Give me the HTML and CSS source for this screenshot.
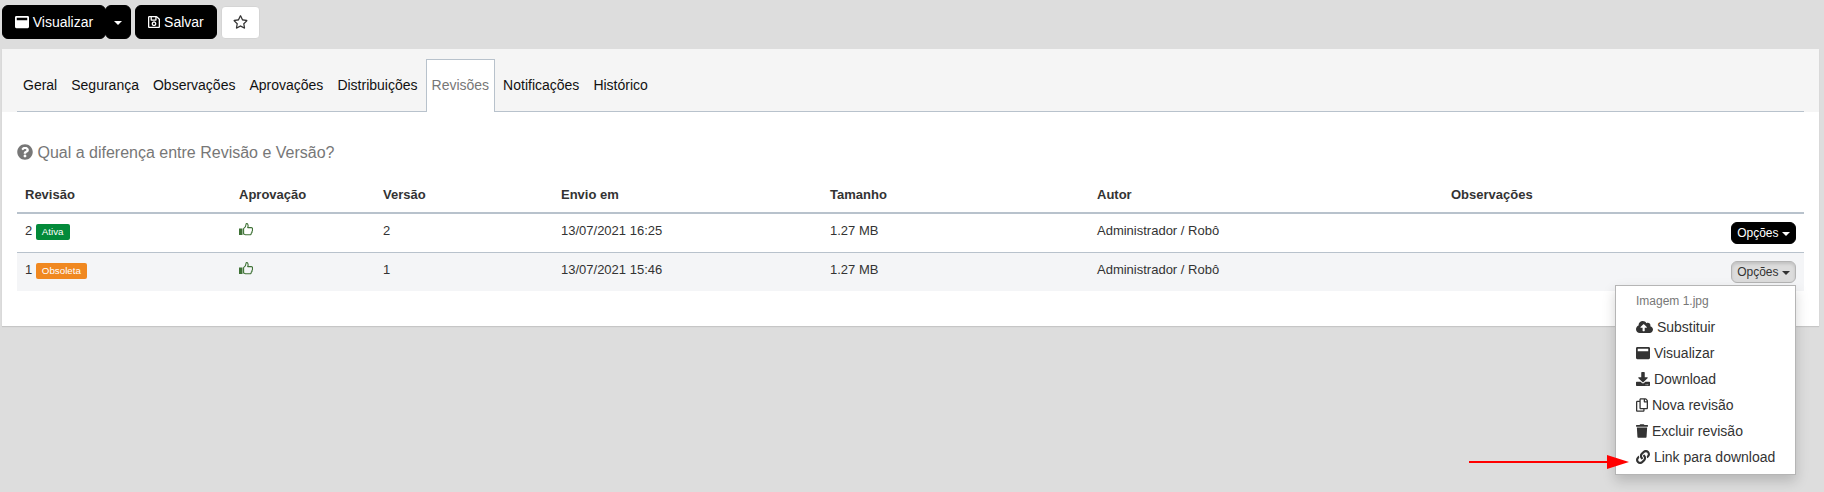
FILE: index.html
```html
<!DOCTYPE html>
<html lang="pt">
<head>
<meta charset="utf-8">
<title>Revisões</title>
<link rel="stylesheet" href="styles.css">
</head>
<body>
<svg class="defs" width="0" height="0">
  <symbol id="i-window" viewBox="0 0 512 512"><path fill="currentColor" d="M464 32H48C21.500 32 0 53.500 0 80v352c0 26.500 21.500 48 48 48h416c26.500 0 48-21.500 48-48V80c0-26.500-21.500-48-48-48zm-16 160H64v-84c0-6.600 5.400-12 12-12h360c6.600 0 12 5.400 12 12v84z"/></symbol>
  <symbol id="i-save" viewBox="0 0 448 512"><path fill="currentColor" fill-rule="evenodd" d="M433.900 129.900l-83.900-83.900A48 48 0 0 0 316.100 32H48C21.500 32 0 53.500 0 80v352c0 26.500 21.500 48 48 48h352c26.500 0 48-21.500 48-48V163.900a48 48 0 0 0-14.100-34zM272 80v80H144V80zM394 432H54a6 6 0 0 1-6-6V86a6 6 0 0 1 6-6h42v104c0 13.300 10.700 24 24 24h176c13.300 0 24-10.700 24-24V83.900l78.200 78.200a6 6 0 0 1 1.800 4.200V426a6 6 0 0 1-6 6zM224 232c-48.500 0-88 39.500-88 88s39.500 88 88 88 88-39.500 88-88-39.500-88-88-88zm0 128c-22.100 0-40-17.900-40-40s17.900-40 40-40 40 17.900 40 40-17.900 40-40 40z"/></symbol>
  <symbol id="i-star" viewBox="0 0 576 512"><path fill="currentColor" d="M528.100 171.500L382 150.200 316.700 17.800c-11.700-23.600-45.600-23.900-57.400 0L194 150.200 47.900 171.500c-26.200 3.800-36.700 36.100-17.700 54.600l105.700 103-25 145.500c-4.500 26.300 23.200 46 46.400 33.700L288 439.600l130.700 68.700c23.200 12.200 50.900-7.400 46.400-33.700l-25-145.500 105.700-103c19-18.500 8.500-50.800-17.700-54.600zM388.600 312.300l23.700 138.400L288 385.400l-124.300 65.300 23.700-138.400-100.600-98 139-20.200 62.200-126 62.200 126 139 20.200-100.600 98z"/></symbol>
  <symbol id="i-question" viewBox="0 0 512 512"><path fill="currentColor" d="M504 256c0 137-111 248-248 248S8 393 8 256C8 119.100 119 8 256 8s248 111.100 248 248zM262.700 90c-54.500 0-89.300 23-116.500 63.800-3.500 5.300-2.400 12.400 2.700 16.300l34.700 26.300c5.200 3.900 12.600 3 16.700-2.100 17.900-22.700 30.100-35.800 57.300-35.800 20.400 0 45.700 13.100 45.700 33 0 15-12.400 22.700-32.600 34-23.600 13.200-54.800 29.700-54.800 70.900V300c0 6.600 5.400 12 12 12h56c6.600 0 12-5.400 12-12v-1.300c0-28.600 83.500-29.800 83.500-107.200 0-58.300-60.500-102.500-117.200-102.500zM256 339.200c-25.500 0-46.200 20.700-46.200 46.200 0 25.500 20.700 46.200 46.200 46.200s46.200-20.700 46.200-46.200c0-25.500-20.700-46.200-46.200-46.200z"/></symbol>
  <symbol id="i-thumb" viewBox="0 0 14 13"><rect x="0" y="5.500" width="3.500" height="6.500" fill="currentColor"/><path fill="none" stroke="currentColor" stroke-width="1.100" stroke-linejoin="round" d="M4.600 5.600C6.200 4.500 7 3 7 1.500 7 .8 7.500.4 8 .6c1.200.5 1.400 2.500.7 4h3.500c1.200 0 1.600 1 1.200 1.800.4.700.2 1.500-.4 1.900.2.800-.1 1.500-.7 1.800.1 1-.5 1.700-1.500 1.700H8.200c-1.500 0-2.500-.4-3.600-.9z"/></symbol>
  <symbol id="i-cloud" viewBox="0 0 640 512"><path fill="currentColor" d="M537.600 226.600c4.100-10.700 6.400-22.400 6.400-34.600 0-53-43-96-96-96-19.700 0-38.100 6-53.300 16.200C367 64.200 315.300 32 256 32c-88.400 0-160 71.600-160 160 0 2.700.1 5.400.2 8.100C40.200 219.800 0 273.200 0 336c0 79.500 64.500 144 144 144h368c70.700 0 128-57.300 128-128 0-61.900-44-113.600-102.400-125.400zM393.400 288H328v112c0 8.800-7.200 16-16 16h-48c-8.800 0-16-7.200-16-16V288h-65.400c-14.300 0-21.400-17.200-11.300-27.300l105.400-105.400c6.200-6.200 16.400-6.200 22.600 0l105.400 105.400c10.100 10.100 2.900 27.300-11.300 27.300z"/></symbol>
  <symbol id="i-download" viewBox="0 0 512 512"><path fill="currentColor" d="M216 0h80c13.300 0 24 10.700 24 24v168h87.700c17.800 0 26.700 21.500 14.100 34.100L269.700 378.300c-7.500 7.500-19.800 7.500-27.300 0L90.100 226.100c-12.600-12.600-3.700-34.100 14.100-34.100H192V24c0-13.300 10.700-24 24-24zm296 376v112c0 13.300-10.700 24-24 24H24c-13.300 0-24-10.700-24-24V376c0-13.300 10.700-24 24-24h146.700l49 49c20.100 20.100 52.500 20.100 72.600 0l49-49H488c13.300 0 24 10.700 24 24zm-124 88c0-11-9-20-20-20s-20 9-20 20 9 20 20 20 20-9 20-20zm64 0c0-11-9-20-20-20s-20 9-20 20 9 20 20 20 20-9 20-20z"/></symbol>
  <symbol id="i-copy" viewBox="0 0 448 512"><path fill="currentColor" d="M433.900 65.900l-51.900-51.900A48 48 0 0 0 348.100 0H176c-26.500 0-48 21.500-48 48v48H48c-26.500 0-48 21.500-48 48v320c0 26.500 21.500 48 48 48h224c26.500 0 48-21.500 48-48v-48h80c26.500 0 48-21.500 48-48V99.900a48 48 0 0 0-14.100-34zM266 464H54a6 6 0 0 1-6-6V150a6 6 0 0 1 6-6h74v224c0 26.500 21.500 48 48 48h96v42a6 6 0 0 1-6 6zm128-96H182a6 6 0 0 1-6-6V54a6 6 0 0 1 6-6h106v88c0 13.300 10.700 24 24 24h88v198a6 6 0 0 1-6 6zm6-256h-64V48h9.600c1.600 0 3.100.6 4.200 1.800l48.400 48.400a6 6 0 0 1 1.800 4.200z"/></symbol>
  <symbol id="i-trash" viewBox="0 0 448 512"><path fill="currentColor" d="M432 32H312l-9.400-18.700A24 24 0 0 0 281.100 0H166.800a23.700 23.700 0 0 0-21.400 13.300L136 32H16A16 16 0 0 0 0 48v32a16 16 0 0 0 16 16h416a16 16 0 0 0 16-16V48a16 16 0 0 0-16-16zM53.200 467a48 48 0 0 0 47.900 45h245.800a48 48 0 0 0 47.900-45L416 128H32z"/></symbol>
  <symbol id="i-link" viewBox="0 0 512 512"><path fill="currentColor" d="M326.600 185.400c59.700 59.800 58.900 155.700.4 214.600-.1.100-.2.300-.4.400l-67.200 67.200c-59.300 59.300-155.700 59.300-215 0-59.300-59.300-59.300-155.700 0-215l37.100-37.100c9.800-9.800 26.800-3.300 27.300 10.600.6 17.700 3.800 35.500 9.700 52.700 2 5.800.6 12.300-3.800 16.600l-13.100 13.100c-28 28-28.900 73.700-1.200 102 28 28.600 74.100 28.700 102.300.5l67.200-67.200c28.200-28.200 28.100-73.800 0-101.800-3.700-3.700-7.400-6.600-10.300-8.600a16 16 0 0 1-6.900-12.600c-.4-10.600 3.400-21.500 11.700-29.800l21.100-21.100c5.500-5.500 14.200-6.200 20.600-1.700a152.500 152.500 0 0 1 20.500 17.200zM467.500 44.400c-59.300-59.300-155.700-59.300-215 0l-67.200 67.200c-.1.100-.3.300-.4.400-58.600 58.900-59.400 154.800.4 214.600a152.500 152.500 0 0 0 20.500 17.200c6.400 4.500 15.100 3.800 20.600-1.700l21.100-21.100c8.300-8.300 12.100-19.200 11.700-29.800a16 16 0 0 0-6.900-12.600c-2.900-2-6.600-4.900-10.300-8.600-28.100-28.100-28.200-73.600 0-101.800l67.200-67.200c28.200-28.200 74.300-28.100 102.300.5 27.800 28.300 26.900 73.900-1.200 102l-13.100 13.100c-4.400 4.400-5.800 10.800-3.800 16.600 5.900 17.200 9 35 9.700 52.700.5 13.900 17.500 20.400 27.300 10.600l37.100-37.100c59.300-59.300 59.300-155.700 0-215z"/></symbol>
</svg>

<div class="toolbar">
  <div class="split">
    <button class="btn btn-dark btn-main"><svg class="ico ico-w"><use href="#i-window"/></svg> Visualizar</button>
    <button class="btn btn-dark btn-caret"><span class="caret"></span></button>
  </div>
  <button class="btn btn-dark btn-save"><svg class="ico ico-s"><use href="#i-save"/></svg> Salvar</button>
  <button class="btn btn-star"><svg class="ico ico-star"><use href="#i-star"/></svg></button>
</div>

<main class="panel">
  <nav class="tabs">
    <a class="tab">Geral</a>
    <a class="tab">Segurança</a>
    <a class="tab">Observações</a>
    <a class="tab">Aprovações</a>
    <a class="tab">Distribuições</a>
    <a class="tab active">Revisões</a>
    <a class="tab">Notificações</a>
    <a class="tab">Histórico</a>
  </nav>
  <div class="content">
    <p class="help"><svg class="ico ico-q"><use href="#i-question"/></svg> Qual a diferença entre Revisão e Versão?</p>
    <table class="grid">
      <thead>
        <tr>
          <th class="c1">Revisão</th>
          <th class="c2">Aprovação</th>
          <th class="c3">Versão</th>
          <th class="c4">Envio em</th>
          <th class="c5">Tamanho</th>
          <th class="c6">Autor</th>
          <th class="c7">Observações</th>
          <th class="c8"></th>
        </tr>
      </thead>
      <tbody>
        <tr>
          <td>2 <span class="badge green">Ativa</span></td>
          <td><svg class="thumb"><use href="#i-thumb"/></svg></td>
          <td>2</td>
          <td>13/07/2021 16:25</td>
          <td>1.27 MB</td>
          <td>Administrador / Robô</td>
          <td></td>
          <td class="right"><button class="opt opt-dark">Opções <span class="caret"></span></button></td>
        </tr>
        <tr class="odd">
          <td>1 <span class="badge orange">Obsoleta</span></td>
          <td><svg class="thumb"><use href="#i-thumb"/></svg></td>
          <td>1</td>
          <td>13/07/2021 15:46</td>
          <td>1.27 MB</td>
          <td>Administrador / Robô</td>
          <td></td>
          <td class="right"><button class="opt opt-open">Opções <span class="caret"></span></button></td>
        </tr>
      </tbody>
    </table>
  </div>
</main>

<ul class="menu">
  <li class="menu-head">Imagem 1.jpg</li>
  <li><svg class="mi mi-cloud"><use href="#i-cloud"/></svg> Substituir</li>
  <li><svg class="mi mi-win"><use href="#i-window"/></svg> Visualizar</li>
  <li><svg class="mi mi-win"><use href="#i-download"/></svg> Download</li>
  <li><svg class="mi mi-nar"><use href="#i-copy"/></svg> Nova revisão</li>
  <li><svg class="mi mi-nar"><use href="#i-trash"/></svg> Excluir revisão</li>
  <li><svg class="mi mi-win"><use href="#i-link"/></svg> Link para download</li>
</ul>

<div class="arrow"><span class="arrow-line"></span><span class="arrow-head"></span></div>
</body>
</html>
```
FILE: styles.css
```css
* { box-sizing: border-box; }
html, body { margin: 0; padding: 0; }
body {
  width: 1824px;
  height: 492px;
  overflow: hidden;
  position: relative;
  background: #dddddd;
  font-family: "Liberation Sans", Arial, sans-serif;
  font-size: 13px;
  color: #333;
}
.defs { position: absolute; }
.toolbar {
  display: flex;
  align-items: center;
  height: 49px;
  padding: 0 0 5px 2px;
}
.split { display: flex; margin-right: 4px; }
.btn {
  font: 14px "Liberation Sans", Arial, sans-serif;
  height: 34px;
  border-radius: 6px;
  border: 1px solid #000;
  padding: 0;
}
.btn-dark { background: #000; color: #fff; }
.btn-main { width: 104px; }
.btn-caret { width: 26px; margin-left: -1px; }
.btn-save { width: 82px; margin-right: 4px; }
.btn-star {
  width: 39px;
  height: 33px;
  background: #fff;
  border-color: #d5d5d5;
  color: #333;
  border-width: 1px;
  border-radius: 4px;
}
.ico { display: inline-block; vertical-align: -2px; }
.ico-w { width: 14px; height: 14px; color: #fff; }
.ico-s { width: 12px; height: 14px; color: #fff; }
.ico-star { width: 15px; height: 14px; color: #333; }
.caret {
  display: inline-block;
  width: 0;
  height: 0;
  vertical-align: middle;
  border-top: 4px solid currentColor;
  border-left: 4px solid transparent;
  border-right: 4px solid transparent;
}
.panel {
  margin-left: 2px;
  width: 1817px;
  height: 277px;
  background: #fff;
  box-shadow: 0 1px 1px rgba(0, 0, 0, .1);
}
.tabs {
  display: flex;
  align-items: flex-end;
  height: 63px;
  padding: 0 0 0 14px;
  background: #f5f5f5;
  position: relative;
}
.tabs::after {
  content: "";
  position: absolute;
  left: 15px;
  right: 15px;
  bottom: 0;
  height: 1px;
  background: #b8c2cc;
}
.tab {
  font-size: 14px;
  color: #111;
  height: 53px;
  line-height: 50px;
  padding: 0 6px;
  border: 1px solid transparent;
  border-bottom: 0;
  position: relative;
  z-index: 1;
}
.tab.active {
  background: #fff;
  color: #777;
  border-color: #b8c2cc;
  margin: 0 1px;
  padding: 0 5px;
}
.content { padding: 0 15px; }
.help {
  margin: 0;
  padding-top: 32px;
  font-size: 16px;
  line-height: 18px;
  color: #777;
  height: 69px;
}
.ico-q { width: 16px; height: 16px; color: #777; }
.grid {
  width: 1787px;
  border-collapse: separate;
  border-spacing: 0;
  table-layout: fixed;
  font-size: 13px;
}
.c1 { width: 214px; }
.c2 { width: 144px; }
.c3 { width: 178px; }
.c4 { width: 269px; }
.c5 { width: 267px; }
.c6 { width: 354px; }
.c7 { width: 280px; }
th {
  text-align: left;
  font-weight: 700;
  color: #333;
  padding: 0 8px 3px;
  height: 33px;
  line-height: 28px;
  vertical-align: top;
  border-bottom: 2px solid #b8c2cc;
}
td {
  padding: 8px 8px 0;
  height: 38px;
  vertical-align: top;
  line-height: 18px;
  color: #333;
}
tbody tr:first-child td { border-bottom: 1px solid #b8c2cc; height: 39px; }
.odd td { background: #f4f5f7; }
.right { text-align: right; }
.badge {
  display: inline-block;
  font-size: 9.75px;
  line-height: 12px;
  color: #fff;
  padding: 2px 6px;
  border-radius: 2px;
  vertical-align: 0;
}
.green { background: #038a3a; }
.orange { background: #f08820; }
.thumb { width: 14px; height: 13px; color: #3f7236; display: block; margin-top: 1px; }
.opt {
  font: 12px "Liberation Sans", Arial, sans-serif;
  height: 22px;
  width: 65px;
  padding: 0;
  border-radius: 6px;
  border: 1px solid #000;
  display: inline-block;
  vertical-align: top;
}
.opt-dark { background: #000; color: #fff; }
.opt-open { background: #dcdcdc; color: #333; border-color: #b4b4b4; box-shadow: inset 0 2px 3px rgba(0, 0, 0, .12); }
.menu {
  position: absolute;
  left: 1615px;
  top: 285px;
  width: 181px;
  height: 190px;
  margin: 0;
  padding: 2px 0 0;
  list-style: none;
  background: #fff;
  border: 1px solid #b5b5b5;
  box-shadow: 0 6px 12px rgba(0, 0, 0, .175);
  font-size: 14px;
  color: #333;
}
.menu li {
  height: 26px;
  line-height: 26px;
  padding-left: 20px;
  white-space: nowrap;
}
.menu .menu-head { font-size: 12px; color: #777; }
.mi { display: inline-block; vertical-align: -2px; height: 14px; color: #333; }
.mi-cloud { width: 17px; }
.mi-win { width: 14px; }
.mi-nar { width: 12px; }
.arrow {
  position: absolute;
  left: 1469px;
  top: 455px;
  width: 160px;
  height: 14px;
}
.arrow-line {
  position: absolute;
  left: 0;
  top: 6px;
  width: 140px;
  height: 2px;
  background: #f00;
}
.arrow-head {
  position: absolute;
  right: 0;
  top: 0;
  width: 0;
  height: 0;
  border-left: 22px solid #f00;
  border-top: 7px solid transparent;
  border-bottom: 7px solid transparent;
}
```
